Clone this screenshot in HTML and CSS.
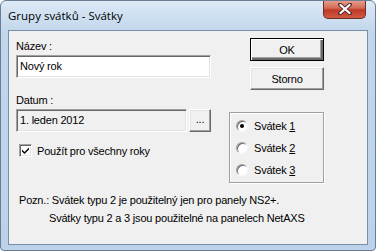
FILE: index.html
```html
<!DOCTYPE html>
<html lang="cs">

<head>
    <meta charset="UTF-8">
    <title>Grupy svátků - Svátky</title>
    <link rel="stylesheet" href="styles.css">
</head>

<body>
    <div class="window">
        <div class="titlebar">
            <span class="title">Grupy svátků - Svátky</span>
            <div class="close">
                <svg width="14" height="12" viewBox="0 0 14 12">
                    <path d="M2 1.5 L12 10.5 M12 1.5 L2 10.5" stroke="#5a2a2a" stroke-width="4" stroke-linecap="round" />
                    <path d="M2.5 2 L11.5 10 M11.5 2 L2.5 10" stroke="#ffffff" stroke-width="2.2" stroke-linecap="round" />
                </svg>
            </div>
        </div>

        <div class="client">
            <div class="main">
                <div class="left">
                    <div class="label">Název :</div>
                    <div class="field">Nový rok</div>

                    <div class="label label-datum">Datum :</div>
                    <div class="date-row">
                        <div class="field field-ro">1. leden 2012</div>
                        <div class="btn btn-dots">...</div>
                    </div>

                    <div class="check-row">
                        <span class="checkbox">
                            <svg width="9" height="9" viewBox="0 0 9 9">
                                <path d="M1 3.5 L3.5 6 L8 1.5 L8 3.5 L3.5 8 L1 5.5 Z" fill="#000" />
                            </svg>
                        </span>
                        <span>Použít pro všechny roky</span>
                    </div>
                </div>

                <div class="right">
                    <div class="btn btn-default">OK</div>
                    <div class="btn btn-storno">Storno</div>

                    <div class="group">
                        <div class="radio-row">
                            <span class="radio checked"></span>
                            <span>Svátek <u>1</u></span>
                        </div>
                        <div class="radio-row">
                            <span class="radio"></span>
                            <span>Svátek <u>2</u></span>
                        </div>
                        <div class="radio-row">
                            <span class="radio"></span>
                            <span>Svátek <u>3</u></span>
                        </div>
                    </div>
                </div>
            </div>

            <div class="note">
                <div>Pozn.: Svátek typu 2 je použitelný jen pro panely NS2+.</div>
                <div class="note-indent">Svátky typu 2 a 3 jsou použitelné na panelech NetAXS</div>
            </div>
        </div>
    </div>
</body>

</html>
```

FILE: styles.css
```css
/* Window frame */
body {
    margin: 0;
    padding: 0;
    background: #ffffff;
}

.window {
    width: 376px;
    height: 251px;
    box-sizing: border-box;
    border: 1px solid #6a7d93;
    border-radius: 6px 6px 4px 4px;
    background: linear-gradient(#dce9f6, #c2d7ec 30px, #bcd2ea);
    display: flex;
    flex-direction: column;
    overflow: hidden;
}

.titlebar {
    height: 29px;
    display: flex;
    align-items: flex-start;
    justify-content: space-between;
    padding-left: 7px;
    box-sizing: border-box;
}

.title {
    font-family: 'Open Sans', sans-serif;
    font-size: 11.5px;
    color: #000;
    margin-top: 7px;
}

.close {
    width: 43px;
    height: 19px;
    margin-right: 9px;
    margin-top: -1px;
    box-sizing: border-box;
    border: 1px solid #6b2f2a;
    border-top: none;
    border-radius: 0 0 5px 5px;
    background: linear-gradient(#e8a493, #d46a55 45%, #c0392a 55%, #cf5b40);
    display: flex;
    align-items: center;
    justify-content: center;
}

/* Client area */
.client {
    flex: 1;
    margin: 0 7px 5px 7px;
    border: 1px solid #7a8ea6;
    background: #f0f0f0;
    padding: 9px 7px 0 7px;
    font-family: 'Liberation Sans', Arial, sans-serif;
    font-size: 11px;
    letter-spacing: -0.2px;
    color: #000;
}

.main {
    display: flex;
    gap: 18px;
}

.left {
    width: 195px;
    display: flex;
    flex-direction: column;
}

.label {
    height: 13px;
    line-height: 13px;
}

.label-datum {
    margin-top: 16px;
}

.field {
    height: 23px;
    margin-top: 2px;
    box-sizing: border-box;
    background: #fff;
    border: 1px solid;
    border-color: #a0a0a0 #ffffff #ffffff #a0a0a0;
    box-shadow: inset 1px 1px #696969, inset -1px -1px #e3e3e3;
    padding: 0 3px;
    line-height: 21px;
}

.date-row {
    display: flex;
    gap: 2px;
    margin-top: 2px;
}

.date-row .field {
    flex: 1;
    margin-top: 0;
}

.field-ro {
    background: #f0f0f0;
}

.check-row {
    display: flex;
    align-items: center;
    gap: 5px;
    margin-top: 12px;
    padding-left: 3px;
}

.checkbox {
    width: 13px;
    height: 13px;
    box-sizing: border-box;
    background: #fff;
    border: 1px solid;
    border-color: #a0a0a0 #ffffff #ffffff #a0a0a0;
    box-shadow: inset 1px 1px #696969, inset -1px -1px #e3e3e3;
    display: flex;
    align-items: center;
    justify-content: center;
}

/* Buttons */
.right {
    width: 95px;
    display: flex;
    flex-direction: column;
    align-items: flex-end;
}

.btn {
    box-sizing: border-box;
    background: #f0f0f0;
    border: 1px solid;
    border-color: #ffffff #696969 #696969 #ffffff;
    box-shadow: inset -1px -1px #a0a0a0, inset 1px 1px #e3e3e3;
    display: flex;
    align-items: center;
    justify-content: center;
}

.btn-default {
    width: 74px;
    height: 23px;
    margin-top: -2px;
    border: 1px solid #000;
    box-shadow: inset 1px 1px #fff, inset -2px -2px #696969, inset -3px -3px #a0a0a0;
}

.btn-storno {
    width: 74px;
    height: 23px;
    margin-top: 6px;
}

.btn-dots {
    width: 22px;
    height: 23px;
    padding-bottom: 3px;
}

/* Radio group */
.group {
    width: 95px;
    height: 71px;
    margin-top: 22px;
    box-sizing: border-box;
    border: 1px solid #a0a0a0;
    box-shadow: inset 1px 1px #fff, 1px 1px #fff;
    padding: 6px 0 0 6px;
    display: flex;
    flex-direction: column;
    gap: 9px;
}

.radio-row {
    display: flex;
    align-items: center;
    gap: 6px;
    height: 13px;
}

.radio {
    width: 12px;
    height: 12px;
    box-sizing: border-box;
    border-radius: 50%;
    background: #fff;
    border: 1px solid;
    border-color: #a0a0a0 #f6f6f6 #f6f6f6 #a0a0a0;
    box-shadow: inset 1px 1px #696969;
    display: flex;
    align-items: center;
    justify-content: center;
}

.radio.checked::after {
    content: '';
    width: 4px;
    height: 4px;
    border-radius: 50%;
    background: #000;
}

/* Note */
.note {
    margin-top: 8px;
    padding-left: 3px;
    line-height: 18px;
}

.note-indent {
    padding-left: 30px;
}
```
